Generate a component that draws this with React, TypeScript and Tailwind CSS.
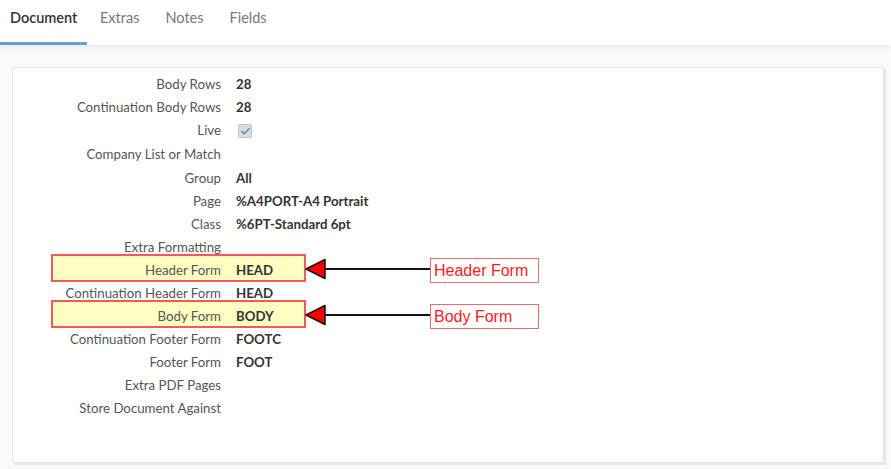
import { Check } from "lucide-react";

const rows: { label: string; value?: string; check?: boolean; mark?: boolean; tall?: boolean }[] = [
  { label: "Body Rows", value: "28" },
  { label: "Continuation Body Rows", value: "28" },
  { label: "Live", check: true, tall: true },
  { label: "Company List or Match", tall: true },
  { label: "Group", value: "All" },
  { label: "Page", value: "%A4PORT-A4 Portrait" },
  { label: "Class", value: "%6PT-Standard 6pt" },
  { label: "Extra Formatting" },
  { label: "Header Form", value: "HEAD", mark: true },
  { label: "Continuation Header Form", value: "HEAD" },
  { label: "Body Form", value: "BODY", mark: true },
  { label: "Continuation Footer Form", value: "FOOTC" },
  { label: "Footer Form", value: "FOOT" },
  { label: "Extra PDF Pages" },
  { label: "Store Document Against" },
];

const tabs = ["Document", "Extras", "Notes", "Fields"];

function Callout({ text }: { text: string }) {
  return (
    <div className="absolute left-[292px] top-[-1px] z-10 flex items-center">
      <svg width="125" height="25" viewBox="0 0 125 25" className="block">
        <line x1="20" y1="11" x2="125" y2="11" stroke="#111" strokeWidth="2" />
        <polygon points="1,11 20,1.5 20,20.5" fill="#ff0000" stroke="#111" strokeWidth="1.5" strokeLinejoin="round" />
      </svg>
      <div className="flex h-[25px] w-[109px] items-center border border-[#f06a6a] bg-white pl-[3px] font-['Liberation_Sans',Arial,sans-serif] text-[16px] text-[#ff1a1a]">
        {text}
      </div>
    </div>
  );
}

export default function App() {
  return (
    <div className="min-h-[469px] bg-[#fafafa] font-['Lato','Liberation_Sans',sans-serif]">
      <header className="relative z-10 flex h-[45px] bg-white shadow-[0_3px_8px_rgba(0,0,0,0.07)]">
        {tabs.map((t, i) => (
          <div
            key={t}
            className={
              i === 0
                ? "w-[87px] border-b-[3px] border-[#62a2c8] pl-[10px] pt-[7px] text-[14.5px] font-semibold text-[#333]"
                : "px-[13px] pt-[7px] text-[14.5px] text-[#777]"
            }
          >
            {t}
          </div>
        ))}
      </header>
      <main className="pl-[12px] pr-[7px] pt-[22px]">
        <section className="h-[396px] border border-[#e6e6e6] bg-white pt-[5px] shadow-[2px_2px_0_#e8e8e8]">
          {rows.map((r) => (
            <div
              key={r.label}
              className={`relative flex items-center text-[13.25px] ${r.tall ? "h-[24px]" : "h-[23px]"}`}
            >
              {r.mark && (
                <>
                  <div className="absolute left-[38px] top-[-5px] h-[28px] w-[255px] border-2 border-[#f25a5a] bg-[#fffdc2]" />
                  <Callout text={r.label} />
                </>
              )}
              <div className="relative w-[208px] text-right text-[#555]">{r.label}</div>
              <div className="relative ml-[15px] font-bold text-[#333]">
                {r.check ? (
                  <span className="ml-[2px] flex h-[14px] w-[14px] items-center justify-center rounded-[2px] border border-[#c4c4c4] bg-[#dcdcdc]">
                    <Check size={11} strokeWidth={3.5} className="text-[#4a8fd6]" />
                  </span>
                ) : (
                  r.value
                )}
              </div>
            </div>
          ))}
        </section>
      </main>
    </div>
  );
}
